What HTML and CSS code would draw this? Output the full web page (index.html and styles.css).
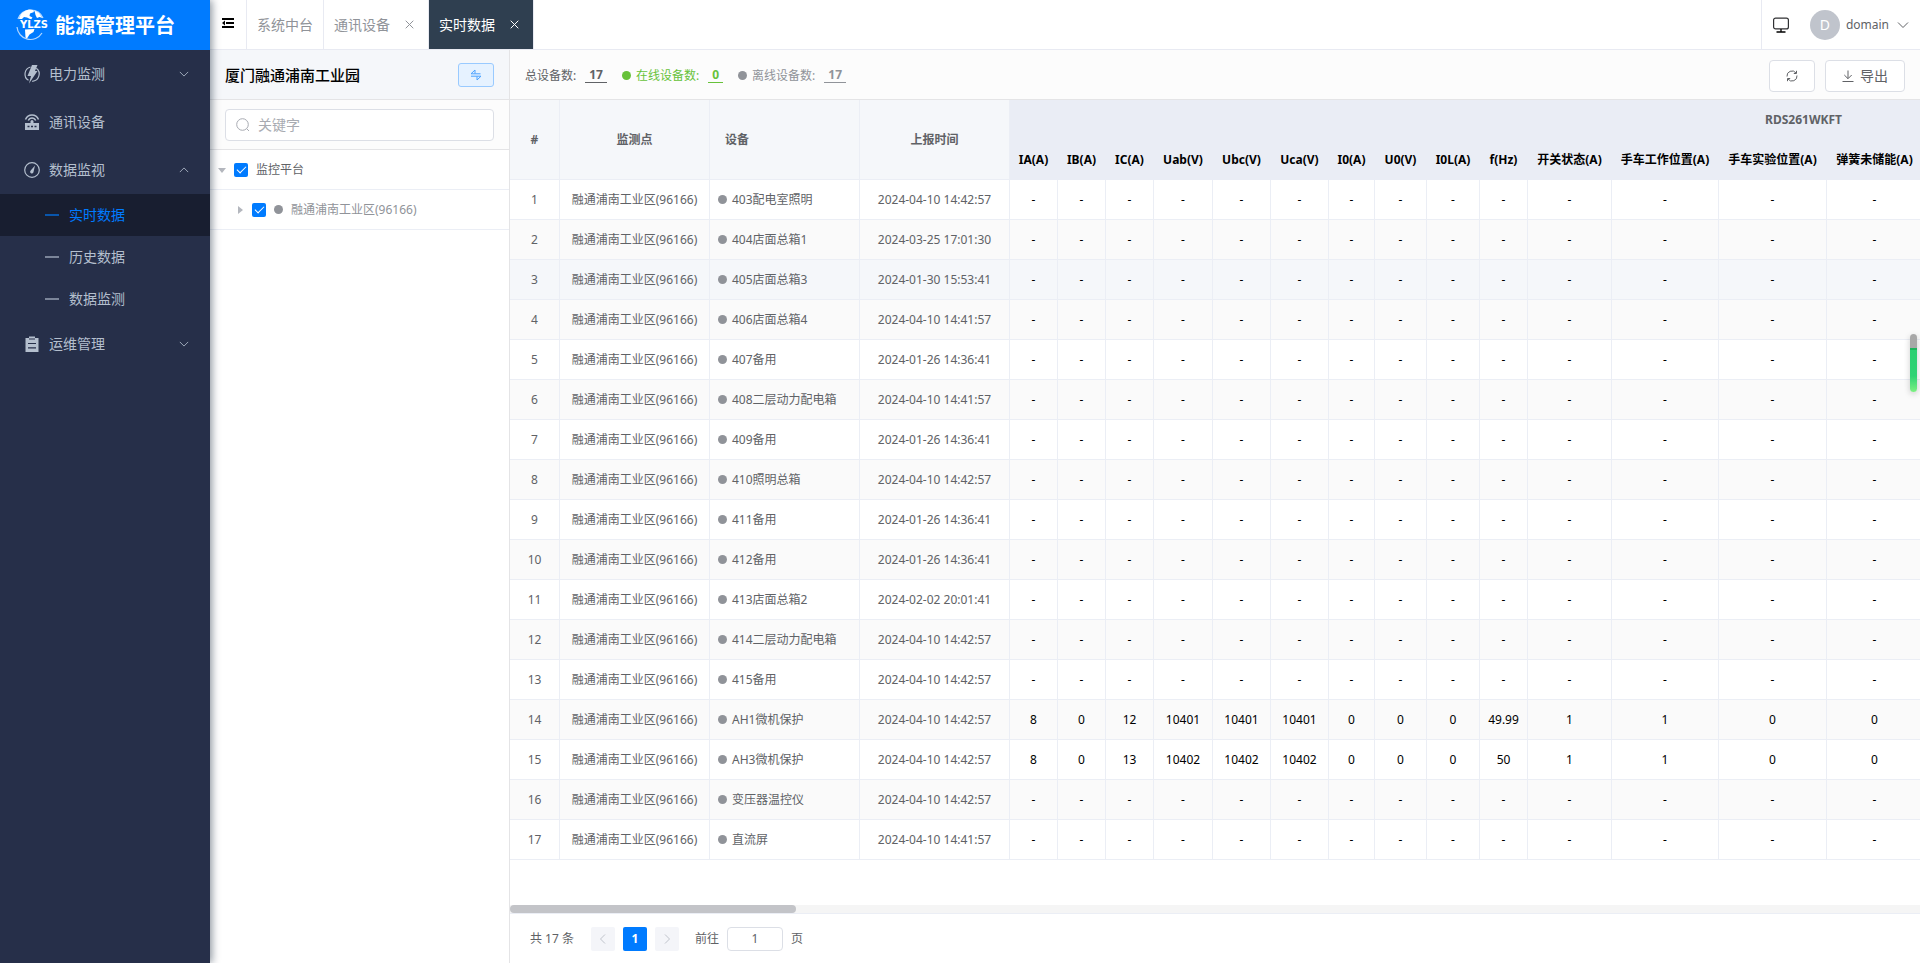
FILE: index.html
```html
<!DOCTYPE html>
<html lang="zh-CN">
<head>
<meta charset="utf-8">
<title>能源管理平台</title>
<link rel="stylesheet" href="styles.css">
</head>
<body>
<svg class="sprite" aria-hidden="true">
  <symbol id="down" viewBox="0 0 12 12"><path d="M1 3.5l5 5 5-5" fill="none" stroke="currentColor"/></symbol>
  <symbol id="up" viewBox="0 0 12 12"><path d="M1 8.5l5-5 5 5" fill="none" stroke="currentColor"/></symbol>
  <symbol id="close" viewBox="0 0 9 9"><path d="M.7.7l7.6 7.6M8.3.7L.7 8.3" fill="none" stroke="currentColor"/></symbol>
</svg>
<div class="app">
  <aside class="sidebar">
    <a class="brand" href="#">
      <svg class="brand-logo" viewBox="0 0 34 34">
        <path d="M2 11A13.500 13.500 0 0 1 27 10M1 19A13.500 13.500 0 0 0 26 25" fill="none" stroke="#fff" stroke-opacity=".7" stroke-width="1.200"/>
        <path d="M3 11C4 6 8 2.500 13 1.500l4 .5 1 2-4 1.500-.5 2.500 3 1.500-1.500 2-4-2-3-.5-3 3zM18.500 2.500l4.500 2.500 3.500 5-3-1-2.500 1-1.500-3zM9 21.500l9.500-.5-1 3-4 2.500-2.500 4-1.500-1z" fill="#fff"/>
        <text x="4" y="20" class="brand-mark">YLZS</text>
      </svg>
      <span>能源管理平台</span>
    </a>
    <nav>
      <a class="menu" href="#">
        <svg class="menu-icon" viewBox="0 0 16 16"><path d="M6.500 1A7.300 7.300 0 0 0 4.500 14.300M12.300 2.200A7.300 7.300 0 0 1 8.200 15.300" fill="none" stroke="currentColor" stroke-width="1.200"/><path d="M8-1h5.500L11 5h2.500L5 17.500 7 10H3.500z" fill="currentColor"/></svg>
        <span>电力监测</span><svg class="arrow"><use href="#down"/></svg>
      </a>
      <a class="menu" href="#">
        <svg class="menu-icon" viewBox="0 0 16 16"><path d="M1 9h14v7H1z" fill="currentColor"/><path d="M3.500 12.500h2M7 12.500h2M10.500 12.500h2" stroke="#262f49" stroke-width="1.500"/><path d="M1.500 5.500C4-.5 12-.5 14.500 5.500M4.300 6.500c1.500-3.300 5.900-3.300 7.400 0" fill="none" stroke="currentColor" stroke-width="1.500"/><path d="M6.500 9V7.500a1.500 1.500 0 0 1 3 0V9" fill="currentColor"/></svg>
        <span>通讯设备</span>
      </a>
      <a class="menu" href="#">
        <svg class="menu-icon" viewBox="0 0 16 16"><circle cx="8" cy="8" r="7.300" fill="none" stroke="currentColor" stroke-width="1.200"/><path d="M11 3.500L9.500 10a1.700 1.700 0 1 1-2.800-1.500z" fill="currentColor"/></svg>
        <span>数据监视</span><svg class="arrow"><use href="#up"/></svg>
      </a>
      <a class="submenu active" href="#"><i></i><span>实时数据</span></a>
      <a class="submenu" href="#"><i></i><span>历史数据</span></a>
      <a class="submenu" href="#"><i></i><span>数据监测</span></a>
      <a class="menu" href="#">
        <svg class="menu-icon" viewBox="0 0 16 16"><path d="M1.500 2H5V.5h6V2h3.500v14h-13z" fill="currentColor"/><path d="M5 3h6M4 7.500h8M4 11.800h8" stroke="#262f49" stroke-width="1.200"/></svg>
        <span>运维管理</span><svg class="arrow"><use href="#down"/></svg>
      </a>
    </nav>
  </aside>

  <div class="page">
    <header class="topbar">
      <button class="fold" type="button" aria-label="收起菜单"><svg viewBox="0 0 12 10"><path d="M0 1h12M4 5h8M0 9h12" stroke="#000" stroke-width="2"/><path d="M0 5l3-2.500v5z"/></svg></button>
      <a class="tab" href="#">系统中台</a>
      <a class="tab" href="#">通讯设备<svg class="close"><use href="#close"/></svg></a>
      <a class="tab current" href="#">实时数据<svg class="close"><use href="#close"/></svg></a>
      <div class="account">
        <svg class="monitor" viewBox="0 0 16 16"><rect x=".6" y="1.100" width="14.800" height="10.800" rx="2" fill="none" stroke="#303133" stroke-width="1.200"/><path d="M8 12v2.500M3.500 15h9" stroke="#000" stroke-width="1.300"/></svg>
        <span class="avatar">D</span>
        <button class="user" type="button">domain<svg class="arrow"><use href="#down"/></svg></button>
      </div>
    </header>

    <div class="body">
      <section class="tree">
        <div class="tree-title">
          <h1>厦门融通浦南工业园</h1>
          <button class="swap" type="button" aria-label="切换"><svg viewBox="0 0 12 12"><path d="M5 1L1 4.800h9.500M5 1v3.500M1 7.200h10L7 11V7.500" fill="none" stroke="currentColor"/></svg></button>
        </div>
        <div class="search">
          <label class="search-box">
            <svg viewBox="0 0 14 14"><circle cx="6.500" cy="6.500" r="5.800" fill="none" stroke="currentColor"/><path d="M10.700 10.700l2.300 2.300" stroke="currentColor"/></svg>
            <input type="text" placeholder="关键字">
          </label>
        </div>
        <div class="node">
          <svg class="caret" viewBox="0 0 8 8"><path d="M0 2h8L4 7z"/></svg>
          <label><input type="checkbox" checked><span>监控平台</span></label>
        </div>
        <div class="node child">
          <svg class="caret" viewBox="0 0 8 8"><path d="M2 0v8l5-4z"/></svg>
          <label><input type="checkbox" checked><span class="dot"></span><span>融通浦南工业区(96166)</span></label>
        </div>
      </section>

      <main class="content">
        <div class="toolbar">
          <div class="stat">总设备数:<a href="#">17</a></div>
          <div class="stat online"><span class="dot"></span>在线设备数:<a href="#">0</a></div>
          <div class="stat offline"><span class="dot"></span>离线设备数:<a href="#">17</a></div>
          <div class="actions">
            <button class="btn" type="button" aria-label="刷新"><svg viewBox="0 0 12 12"><path d="M1 6.500A5 5 0 0 1 10 3M11 5.500A5 5 0 0 1 2 9" fill="none" stroke="currentColor"/><path d="M10.500.8V3.500H7.800M1.500 11.200V8.500h2.700" fill="none" stroke="currentColor"/></svg></button>
            <button class="btn" type="button"><svg viewBox="0 0 12 12"><path d="M6 .5v8M2.300 5L6 8.700 9.700 5M.5 11.500h11" fill="none" stroke="currentColor"/></svg>导出</button>
          </div>
        </div>
        <div class="table-wrap">
          <table>
            <colgroup>
              <col class="w50"><col class="w150"><col class="w150"><col class="w150">
              <col class="w48"><col class="w48"><col class="w48"><col class="w59"><col class="w58"><col class="w58"><col class="w46"><col class="w52"><col class="w53"><col class="w48">
              <col class="w84"><col class="w107"><col class="w108"><col class="w96"><col>
            </colgroup>
            <thead>
              <tr><th rowspan="2">#</th><th rowspan="2">监测点</th><th rowspan="2" class="left">设备</th><th rowspan="2">上报时间</th><th colspan="15" class="group">RDS261WKFT</th></tr>
              <tr class="metrics"><th>IA(A)</th><th>IB(A)</th><th>IC(A)</th><th>Uab(V)</th><th>Ubc(V)</th><th>Uca(V)</th><th>I0(A)</th><th>U0(V)</th><th>I0L(A)</th><th>f(Hz)</th><th>开关状态(A)</th><th>手车工作位置(A)</th><th>手车实验位置(A)</th><th>弹簧未储能(A)</th><th></th></tr>
            </thead>
            <tbody id="rows"></tbody>
          </table>
        </div>
        <div class="scrollbar"><div class="thumb"></div></div>
        <footer class="pager">
          <span>共 17 条</span>
          <button class="pg prev" type="button" disabled aria-label="上一页"><svg viewBox="0 0 12 12"><path d="M8 1.500L3.500 6 8 10.500" fill="none" stroke="currentColor"/></svg></button>
          <button class="pg on" type="button">1</button>
          <button class="pg" type="button" disabled aria-label="下一页"><svg viewBox="0 0 12 12"><path d="M4 1.500L8.500 6 4 10.500" fill="none" stroke="currentColor"/></svg></button>
          <label>前往<input type="text" value="1">页</label>
        </footer>
      </main>
    </div>
  </div>
</div>
<div class="float-handle"></div>
<script src="app.js"></script>
</body>
</html>
```
FILE: styles.css
```css
* { box-sizing: border-box; }
body {
  margin: 0;
  font-family: "Noto Sans", "Noto Sans CJK SC", sans-serif;
  font-size: 12px;
  line-height: 18px;
  color: #606266;
  background: #fff;
}
a { color: inherit; text-decoration: none; }
button, input { font: inherit; color: inherit; margin: 0; }
svg { display: block; flex: none; }
.sprite { display: none; }
.app { display: flex; min-height: 100vh; }

.sidebar {
  width: 210px;
  flex: none;
  background: #262f49;
  color: #b4bfce;
  font-size: 14px;
  box-shadow: 2px 0 8px rgba(0, 21, 41, .45);
  position: relative;
  z-index: 2;
}
.brand {
  display: flex;
  align-items: center;
  height: 50px;
  padding-left: 16px;
  gap: 5px;
  background: #007bff;
  color: #fff;
  font-size: 20px;
  line-height: 28px;
  font-weight: 700;
}
.brand span { padding-top: 2px; }
.brand-logo { width: 34px; height: 34px; overflow: visible; }
.brand-mark { font: 700 10px "DejaVu Sans", sans-serif; fill: #fff; stroke: #007bff; stroke-width: 2px; paint-order: stroke; }
.menu { display: flex; align-items: center; height: 48px; padding: 0 21px 0 24px; }
.menu-icon { width: 16px; height: 16px; margin-right: 9px; overflow: visible; }
.arrow { width: 12px; height: 12px; margin-left: auto; }
.menu .arrow { width: 10px; height: 10px; }
.submenu { display: flex; align-items: center; height: 42px; padding-left: 45px; gap: 10px; }
.submenu i { width: 14px; height: 2px; background: currentColor; opacity: .6; }
.submenu.active { background: #181e30; color: #007bff; }

.page { flex: 1; min-width: 0; display: flex; flex-direction: column; }
.topbar { display: flex; height: 50px; border-bottom: 1px solid #e8eaf2; }
.fold { width: 37px; padding: 0 12px; border: 0; border-right: 1px solid #e8eaf2; background: none; }
.fold svg { width: 12px; height: 10px; margin-bottom: 3px; }
.tab {
  display: flex;
  align-items: center;
  gap: 15px;
  padding: 0 10px;
  border-right: 1px solid #e8eaf2;
  color: #909399;
  font-size: 14px;
}
.tab .close { width: 9px; height: 9px; margin-right: 4px; }
.tab.current { background: #2f3f50; color: #fff; }
.account { display: flex; align-items: center; margin-left: auto; padding: 0 11px; border-left: 1px solid #e8eaf2; }
.monitor { width: 16px; height: 16px; }
.avatar {
  width: 30px;
  height: 30px;
  margin: 0 6px 0 21px;
  border-radius: 50%;
  background: #c0c4cc;
  color: #fff;
  font-size: 14px;
  line-height: 30px;
  text-align: center;
}
.user { display: flex; align-items: center; gap: 8px; padding: 0; border: 0; background: none; }

.body { flex: 1; display: flex; min-height: 0; }
.tree { width: 300px; flex: none; border-right: 1px solid #e4e4e6; }
.tree-title {
  display: flex;
  align-items: center;
  justify-content: space-between;
  height: 50px;
  padding: 0 15px;
  border-bottom: 1px solid #e4e4e6;
  background: #f5f7fa;
}
.tree-title h1 { margin: 0; font-size: 15px; font-weight: 500; color: #000; }
.swap {
  display: flex;
  align-items: center;
  justify-content: center;
  width: 36px;
  height: 24px;
  padding: 0;
  border: 1px solid #99caff;
  border-radius: 3px;
  background: #e6f2ff;
  color: #4ba2ff;
}
.swap svg { width: 12px; height: 12px; }
.search { padding: 9px 15px 8px; border-bottom: 1px solid #e4e4e6; background: #fcfcfc; }
.search-box {
  display: flex;
  align-items: center;
  gap: 8px;
  height: 32px;
  padding: 0 10px;
  border: 1px solid #dcdfe6;
  border-radius: 4px;
  background: #fff;
  color: #a8abb2;
}
.search-box svg { width: 14px; height: 14px; }
.search-box input { flex: 1; min-width: 0; padding: 0; border: 0; outline: 0; font-size: 14px; background: none; }
.search-box input::placeholder { color: #a8abb2; }
.node { display: flex; align-items: center; height: 40px; padding-left: 8px; border-bottom: 1px solid #ebeef5; }
.node.child { padding-left: 26px; color: #909399; }
.caret { width: 8px; height: 8px; margin-right: 8px; fill: #b4b7be; }
.node label { display: flex; align-items: center; gap: 8px; }
.node input {
  appearance: none;
  width: 14px;
  height: 14px;
  border-radius: 2px;
  background: #007bff;
  display: grid;
  place-items: center;
}
.node input::after {
  content: "";
  width: 4px;
  height: 8px;
  margin-bottom: 2px;
  border: solid #fff;
  border-width: 0 1px 1px 0;
  transform: rotate(45deg);
}
.dot { display: inline-block; width: 9px; height: 9px; border-radius: 50%; background: #909399; flex: none; }

.content { flex: 1; min-width: 0; display: flex; flex-direction: column; }
.toolbar { display: flex; align-items: center; height: 50px; padding: 2px 15px 0; border-bottom: 1px solid #e4e4e6; background: #fcfcfc; }
.stat { display: flex; align-items: center; margin-right: 15px; }
.stat .dot { margin-right: 5px; }
.stat a { margin-left: 9px; padding: 0 4px; font-weight: 700; line-height: 14px; border-bottom: 1px solid currentColor; }
.online { color: #67c23a; }
.online .dot { background: #67c23a; }
.offline { color: #909399; }
.actions { display: flex; gap: 10px; margin-left: auto; }
.btn {
  display: flex;
  align-items: center;
  gap: 6px;
  height: 32px;
  padding: 0 16px;
  border: 1px solid #dcdfe6;
  border-radius: 4px;
  background: #fff;
  font-size: 14px;
}
.btn svg { width: 12px; height: 12px; }

.table-wrap { flex: 1; overflow: hidden; }
table { width: 2088px; table-layout: fixed; border-collapse: separate; border-spacing: 0; text-align: center; }
.w46 { width: 46px; } .w48 { width: 48px; } .w50 { width: 50px; } .w52 { width: 52px; } .w53 { width: 53px; }
.w58 { width: 58px; } .w59 { width: 59px; } .w84 { width: 84px; } .w96 { width: 96px; } .w107 { width: 107px; }
.w108 { width: 108px; } .w150 { width: 150px; }
th, td { height: 40px; padding: 0; border: solid #ebeef5; border-width: 0 1px 1px 0; white-space: nowrap; }
th { background: #f5f7fa; font-weight: 700; }
th.left { text-align: left; padding-left: 15px; }
th.group, .metrics th { background: #eaedf5; border-color: #eaedf5; }
.metrics th, .value { color: #000; }
tr:nth-child(even) td { background: #fafafa; }
tr.hover td { background: #f5f7fa; }
.device { text-align: left; padding-left: 8px; }
.device .dot { margin-right: 5px; }

.scrollbar { height: 9px; border-bottom: 1px solid #ebeef5; background: #f5f5f5; }
.thumb { width: 286px; height: 8px; border-radius: 4px; background: #c3c4c8; }
.pager { display: flex; align-items: center; height: 49px; padding-left: 20px; }
.pg {
  display: flex;
  align-items: center;
  justify-content: center;
  width: 24px;
  height: 24px;
  margin-right: 8px;
  padding: 0;
  border: 0;
  border-radius: 2px;
  background: #f4f5f9;
  color: #c0c4cc;
}
.pg svg { width: 12px; height: 12px; }
.prev { margin-left: 17px; }
.pg.on { background: #007bff; color: #fff; font-weight: 700; }
.pager label { display: flex; align-items: center; gap: 8px; margin-left: 8px; }
.pager input { width: 56px; height: 24px; padding: 0; border: 1px solid #dcdfe6; border-radius: 4px; text-align: center; }

.float-handle {
  position: fixed;
  right: 3px;
  top: 334px;
  width: 7px;
  height: 58px;
  border-radius: 4px;
  background: linear-gradient(#a8a8a8 14px, #1cb45c 14px, #1cb45c 16px, #2bd071 16px, #2fd374 42px, #7df082);
  box-shadow: 0 2px 6px rgba(0, 0, 0, .2);
}
```
FILE: app.js
```js
const none = Array(14).fill('-');
const rows = [
  ['403配电室照明', '2024-04-10 14:42:57', none],
  ['404店面总箱1', '2024-03-25 17:01:30', none],
  ['405店面总箱3', '2024-01-30 15:53:41', none],
  ['406店面总箱4', '2024-04-10 14:41:57', none],
  ['407备用', '2024-01-26 14:36:41', none],
  ['408二层动力配电箱', '2024-04-10 14:41:57', none],
  ['409备用', '2024-01-26 14:36:41', none],
  ['410照明总箱', '2024-04-10 14:42:57', none],
  ['411备用', '2024-01-26 14:36:41', none],
  ['412备用', '2024-01-26 14:36:41', none],
  ['413店面总箱2', '2024-02-02 20:01:41', none],
  ['414二层动力配电箱', '2024-04-10 14:42:57', none],
  ['415备用', '2024-04-10 14:42:57', none],
  ['AH1微机保护', '2024-04-10 14:42:57', [8, 0, 12, 10401, 10401, 10401, 0, 0, 0, 49.99, 1, 1, 0, 0]],
  ['AH3微机保护', '2024-04-10 14:42:57', [8, 0, 13, 10402, 10402, 10402, 0, 0, 0, 50, 1, 1, 0, 0]],
  ['变压器温控仪', '2024-04-10 14:42:57', none],
  ['直流屏', '2024-04-10 14:41:57', none],
];
document.getElementById('rows').innerHTML = rows.map(([name, time, values], i) =>
  `<tr class="${i === 2 ? 'hover' : ''}"><td>${i + 1}</td><td>融通浦南工业区(96166)</td>` +
  `<td class="device"><span class="dot"></span>${name}</td><td>${time}</td>` +
  values.map(v => `<td class="value">${v}</td>`).join('') + '<td></td></tr>').join('');
```
